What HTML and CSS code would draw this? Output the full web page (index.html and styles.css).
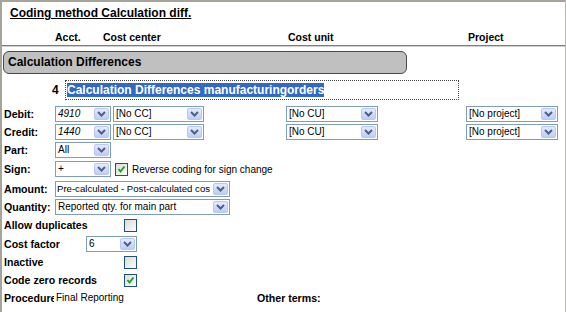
FILE: index.html
```html
<!DOCTYPE html>
<html>
<head>
<meta charset="utf-8">
<link rel="stylesheet" href="styles.css">
</head>
<body>
<div class="frame">
  <h1 class="title">Coding method Calculation diff.</h1>
  <div class="heads">
    <span class="h-acct">Acct.</span>
    <span class="h-cc">Cost center</span>
    <span class="h-cu">Cost unit</span>
    <span class="h-proj">Project</span>
  </div>
  <div class="bar">Calculation Differences</div>
  <div class="desc">
    <span class="num">4</span>
    <div class="input"><span class="hl">Calculation Differences manufacturingorders</span></div>
  </div>
  <div class="form">
    <div class="row">
      <span class="lbl">Debit:</span>
      <div class="sel w-acct"><span class="txt it">4910</span><span class="btn"><svg width="9" height="6" viewBox="0 0 9 6"><path d="M1 1 L4.5 4.5 L8 1" fill="none" stroke="#4d6185" stroke-width="2"/></svg></span></div>
      <div class="sel w-cc"><span class="txt">[No CC]</span><span class="btn"><svg width="9" height="6" viewBox="0 0 9 6"><path d="M1 1 L4.5 4.5 L8 1" fill="none" stroke="#4d6185" stroke-width="2"/></svg></span></div>
      <div class="sel w-cu"><span class="txt">[No CU]</span><span class="btn"><svg width="9" height="6" viewBox="0 0 9 6"><path d="M1 1 L4.5 4.5 L8 1" fill="none" stroke="#4d6185" stroke-width="2"/></svg></span></div>
      <div class="sel w-proj"><span class="txt">[No project]</span><span class="btn"><svg width="9" height="6" viewBox="0 0 9 6"><path d="M1 1 L4.5 4.5 L8 1" fill="none" stroke="#4d6185" stroke-width="2"/></svg></span></div>
    </div>
    <div class="row">
      <span class="lbl">Credit:</span>
      <div class="sel w-acct"><span class="txt it">1440</span><span class="btn"><svg width="9" height="6" viewBox="0 0 9 6"><path d="M1 1 L4.5 4.5 L8 1" fill="none" stroke="#4d6185" stroke-width="2"/></svg></span></div>
      <div class="sel w-cc"><span class="txt">[No CC]</span><span class="btn"><svg width="9" height="6" viewBox="0 0 9 6"><path d="M1 1 L4.5 4.5 L8 1" fill="none" stroke="#4d6185" stroke-width="2"/></svg></span></div>
      <div class="sel w-cu"><span class="txt">[No CU]</span><span class="btn"><svg width="9" height="6" viewBox="0 0 9 6"><path d="M1 1 L4.5 4.5 L8 1" fill="none" stroke="#4d6185" stroke-width="2"/></svg></span></div>
      <div class="sel w-proj"><span class="txt">[No project]</span><span class="btn"><svg width="9" height="6" viewBox="0 0 9 6"><path d="M1 1 L4.5 4.5 L8 1" fill="none" stroke="#4d6185" stroke-width="2"/></svg></span></div>
    </div>
    <div class="row">
      <span class="lbl">Part:</span>
      <div class="sel w-acct"><span class="txt">All</span><span class="btn"><svg width="9" height="6" viewBox="0 0 9 6"><path d="M1 1 L4.5 4.5 L8 1" fill="none" stroke="#4d6185" stroke-width="2"/></svg></span></div>
    </div>
    <div class="row row-sign">
      <span class="lbl">Sign:</span>
      <div class="sel w-acct"><span class="txt">+</span><span class="btn"><svg width="9" height="6" viewBox="0 0 9 6"><path d="M1 1 L4.5 4.5 L8 1" fill="none" stroke="#4d6185" stroke-width="2"/></svg></span></div>
      <span class="cb cb-sign"><svg width="9" height="9" viewBox="0 0 9 9"><path d="M1.5 4 L3.5 6.5 L7.5 1.5" fill="none" stroke="#21a121" stroke-width="2"/></svg></span>
      <span class="cbtext">Reverse coding for sign change</span>
    </div>
    <div class="row row-amount">
      <span class="lbl">Amount:</span>
      <div class="sel w-long"><span class="txt tight">Pre-calculated - Post-calculated cos</span><span class="btn"><svg width="9" height="6" viewBox="0 0 9 6"><path d="M1 1 L4.5 4.5 L8 1" fill="none" stroke="#4d6185" stroke-width="2"/></svg></span></div>
    </div>
    <div class="row">
      <span class="lbl">Quantity:</span>
      <div class="sel w-long"><span class="txt">Reported qty. for main part</span><span class="btn"><svg width="9" height="6" viewBox="0 0 9 6"><path d="M1 1 L4.5 4.5 L8 1" fill="none" stroke="#4d6185" stroke-width="2"/></svg></span></div>
    </div>
    <div class="row">
      <span class="lbl lbl-wide">Allow duplicates</span>
      <span class="cb"></span>
    </div>
    <div class="row row-cost">
      <span class="lbl lbl-mid">Cost factor</span>
      <div class="sel w-cost"><span class="txt">6</span><span class="btn"><svg width="9" height="6" viewBox="0 0 9 6"><path d="M1 1 L4.5 4.5 L8 1" fill="none" stroke="#4d6185" stroke-width="2"/></svg></span></div>
    </div>
    <div class="row">
      <span class="lbl lbl-wide">Inactive</span>
      <span class="cb"></span>
    </div>
    <div class="row">
      <span class="lbl lbl-wide">Code zero records</span>
      <span class="cb"><svg width="9" height="9" viewBox="0 0 9 9"><path d="M1.5 4 L3.5 6.5 L7.5 1.5" fill="none" stroke="#21a121" stroke-width="2"/></svg></span>
    </div>
    <div class="row row-proc">
      <div class="proc-left">
        <span class="lbl lbl-clip">Procedure</span>
        <span class="plain">Final Reporting</span>
      </div>
      <span class="lbl">Other terms:</span>
    </div>
  </div>
</div>
</body>
</html>
```

FILE: styles.css
```css
html, body {
  margin: 0;
  padding: 0;
  background: #fff;
}
body {
  font-family: "Liberation Sans", Arial, sans-serif;
  color: #000;
}
.frame {
  width: 566px;
  height: 312px;
  box-sizing: border-box;
  border-top: 2px solid #a6a39b;
  border-left: 2px solid #a6a39b;
  border-right: 1px solid #b9b6ae;
  overflow: hidden;
}
.title {
  margin: 0;
  font-size: 12px;
  font-weight: bold;
  text-decoration: underline;
  padding-left: 8px;
  line-height: 22px;
  height: 22px;
}
.heads {
  display: flex;
  height: 22px;
  box-sizing: border-box;
  padding-top: 3px;
  line-height: 20px;
  font-size: 10.5px;
  font-weight: bold;
  border-bottom: 1px solid #7c7c7c;
  box-shadow: 0 1px 0 #d0d0d0;
}
.h-acct { margin-left: 53px; width: 48px; }
.h-cc { width: 185px; }
.h-cu { width: 180px; }
.bar {
  margin: 5px 0 0 1px;
  width: 404px;
  height: 23px;
  box-sizing: border-box;
  border: 1px solid #4a4a4a;
  border-radius: 6px;
  background: #c0c0c0;
  font-size: 12px;
  font-weight: bold;
  line-height: 21px;
  padding-left: 4px;
}
.desc {
  display: flex;
  align-items: center;
  margin-top: 6px;
  height: 20px;
}
.num {
  margin-left: 50px;
  width: 13px;
  font-size: 12px;
  font-weight: bold;
}
.input {
  width: 394px;
  height: 20px;
  box-sizing: border-box;
  border: 1px dotted #444;
  padding: 2px 1px;
}
.hl {
  display: inline-block;
  background: #316ac5;
  color: #fff;
  font-size: 12px;
  font-weight: bold;
  line-height: 14px;
  vertical-align: top;
}
.form {
  margin-top: 5px;
}
.row {
  display: flex;
  align-items: center;
  height: 18px;
}
.row-sign { height: 20px; }
.row-amount { height: 19px; }
.row-cost { height: 19px; }
.row-proc { height: 16px; margin-top: 1px; }
.lbl {
  font-size: 10.6px;
  font-weight: bold;
  white-space: nowrap;
}
.row > .lbl:first-child {
  width: 53px;
  box-sizing: border-box;
  padding-left: 2px;
  flex: none;
}
.row > .lbl.lbl-wide { width: 122px; }
.row > .lbl.lbl-mid { width: 84px; }
.lbl-clip {
  width: 52px;
  box-sizing: border-box;
  padding-left: 2px;
  overflow: hidden;
  flex: none;
}
.proc-left {
  display: flex;
  width: 255px;
  flex: none;
}
.plain {
  font-size: 10px;
  margin-left: 2px;
}
.sel {
  display: flex;
  align-items: center;
  height: 16px;
  box-sizing: border-box;
  border: 1px solid #7f9db9;
  background: #fff;
  flex: none;
}
.sel .txt {
  flex: 1;
  min-width: 0;
  padding-left: 2px;
  font-size: 10px;
  line-height: 14px;
  white-space: nowrap;
  overflow: hidden;
}
.sel .txt.it { font-style: italic; }
.sel .txt.tight { font-size: 9.6px; padding-left: 1px; }
.sel .btn {
  width: 15px;
  height: 12px;
  margin: 0 1px;
  flex: none;
  box-sizing: border-box;
  border: 1px solid #b8c8f2;
  border-radius: 2px;
  background: linear-gradient(#e3ebfe, #bccdf8);
  display: flex;
  align-items: center;
  justify-content: center;
}
.w-acct { width: 56px; }
.w-cc { width: 91px; margin-left: 2px; }
.w-cu { width: 92px; margin-left: 82px; }
.w-proj { width: 92px; margin-left: 88px; }
.w-long { width: 175px; }
.w-cost { width: 51px; }
.cb {
  width: 13px;
  height: 13px;
  box-sizing: border-box;
  border: 1px solid #1c5180;
  background: linear-gradient(135deg, #dcdcd6, #fbfbfa);
  display: flex;
  align-items: center;
  justify-content: center;
  flex: none;
}
.cb-sign { margin-left: 4px; }
.cbtext {
  margin-left: 4px;
  font-size: 10px;
}
```
